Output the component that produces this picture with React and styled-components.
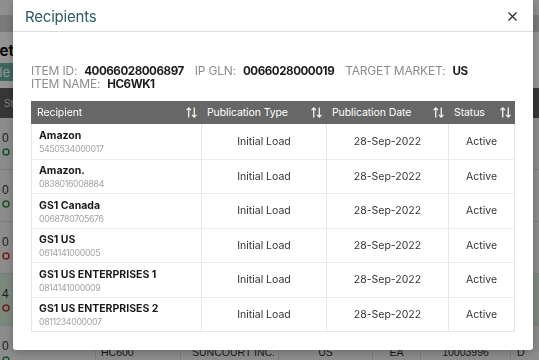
import styled, { createGlobalStyle } from 'styled-components';

const Global = createGlobalStyle`
  html, body { margin: 0; padding: 0; }
  body { font-family: Inter, "Noto Sans", Arial, sans-serif; background: #fff; }
`;

const Page = styled.div`
  width: 539px;
  height: 360px;
  overflow: hidden;
  background: #fff;
`;

const TopStrip = styled.div`
  height: ${p => p.h}px;
  background: ${p => p.bg};
`;

const ClipRow = styled.div`
  height: ${p => p.h}px;
  box-sizing: border-box;
  display: flex;
  align-items: center;
  padding-top: ${p => p.pt || 0}px;
`;

const ClipBox = styled.div`
  width: 14px;
  display: flex;
  justify-content: flex-end;
  overflow: hidden;
  white-space: nowrap;
`;

const PageTitle = styled.span`
  font-weight: 700;
  font-size: 15px;
  color: #111;
`;

const TealButton = styled.span`
  background: #67b0a4;
  color: #fff;
  font-size: 13px;
  padding: 2px 4px 2px 8px;
  line-height: 14px;
`;

const BgTable = styled.div`
  display: grid;
  grid-template-columns: 95px 85px 98px 94px 48px 90px 1fr;
`;

const BgHead = styled.div`
  height: 30px;
  background: #5e5e5e;
  color: #ddd;
  font-size: 10px;
  line-height: 11px;
  display: flex;
  flex-direction: column;
  justify-content: center;
  padding-left: 4px;
`;

const BgCell = styled.div`
  height: 52px;
  box-sizing: border-box;
  border-bottom: 1px solid #d6d6d6;
  border-left: ${p => (p.first ? 'none' : '1px solid #d6d6d6')};
  background: ${p => (p.hl ? '#d4ead6' : '#f1f1f1')};
  font-family: "Liberation Sans", Arial, sans-serif;
  font-size: 10.5px;
  color: #333;
  white-space: nowrap;
  overflow: hidden;
  display: flex;
  align-items: center;
  justify-content: ${p => (p.center ? 'center' : 'flex-start')};
  padding-left: ${p => p.pl || 0}px;
`;

const BgFirst = styled(BgCell)`
  flex-direction: column;
  align-items: flex-start;
  justify-content: flex-start;
  padding: 13px 0 0 2px;
  gap: 3px;
  font-size: 12px;
`;

const Overlay = styled.div`
  position: fixed;
  inset: 0;
  background: rgba(0, 0, 0, 0.42);
  display: flex;
  align-items: flex-start;
  padding-left: 13px;
`;

const Modal = styled.div`
  width: 520px;
  height: 350px;
  background: #fff;
  border-radius: 0 0 3px 3px;
  box-shadow: 0 2px 8px rgba(0, 0, 0, 0.25);
  display: flex;
  flex-direction: column;
`;

const ModalHeader = styled.div`
  height: 35px;
  box-sizing: border-box;
  border-bottom: 1px solid #dcdcdc;
  display: flex;
  align-items: center;
  justify-content: space-between;
  padding: 2px 15px 0 12px;
`;

const Title = styled.h2`
  margin: 0;
  font-size: 15px;
  font-weight: 400;
  color: #2c5c62;
  letter-spacing: -0.2px;
`;

const CloseBtn = styled.button`
  border: 0;
  background: none;
  padding: 0;
  width: 11px;
  height: 11px;
  display: flex;
  cursor: pointer;
`;

const Body = styled.div`
  padding: 32px 18px 18px;
  display: flex;
  flex-direction: column;
  gap: 11px;
`;

const Info = styled.div`
  font-size: 12px;
  line-height: 13px;
`;

const InfoLine = styled.div`
  display: flex;
  align-items: baseline;
  height: 13px;
  white-space: nowrap;
`;

const Label = styled.span`
  color: #8c8c8c;
  margin-right: 7px;
  letter-spacing: -0.2px;
`;

const Value = styled.span`
  color: #1c1c1c;
  font-weight: 700;
  font-size: 11.6px;
  letter-spacing: -0.45px;
  margin-right: 11px;
`;

const Table = styled.div`
  display: grid;
  grid-template-columns: 170px 125px 122px 67px;
  border-bottom: 1px solid #e6e6e6;
`;

const Th = styled.div`
  height: 23px;
  background: #676767;
  color: #fff;
  font-size: 10.5px;
  letter-spacing: -0.1px;
  display: flex;
  align-items: center;
  justify-content: space-between;
  padding: 0 4px 0 6px;
`;

const Td = styled.div`
  height: 34.5px;
  box-sizing: border-box;
  border-top: ${p => (p.firstRow ? 'none' : '1px solid #ececec')};
  border-left: 1px solid #e6e6e6;
  border-right: ${p => (p.last ? '1px solid #e6e6e6' : 'none')};
  display: flex;
  align-items: center;
  justify-content: center;
  font-size: 10.5px;
  color: #333;
`;

const RecipientCell = styled(Td)`
  flex-direction: column;
  align-items: flex-start;
  justify-content: center;
  padding: 1px 0 0 7px;
  gap: 1px;
`;

const Name = styled.div`
  font-weight: 700;
  font-size: 10.5px;
  color: #1a1a1a;
`;

const Gln = styled.div`
  font-size: 8.8px;
  letter-spacing: -0.35px;
  color: #a3a3a3;
`;

const SortIcon = () => (
  <svg width="11" height="11" viewBox="0 0 12 12" fill="none" stroke="#fff" strokeWidth="1.3">
    <path d="M3 11.5V1M0.6 3.4L3 1l2.4 2.4" />
    <path d="M9 0.5V11M6.6 8.6L9 11l2.4-2.4" />
  </svg>
);

const LinkDot = ({ color }) => (
  <svg width="8" height="8" viewBox="0 0 8 8">
    <circle cx="4" cy="4" r="3" fill="none" stroke={color} strokeWidth="1.6" />
  </svg>
);

const recipients = [
  ['Amazon', '5450534000017'],
  ['Amazon.', '0838016008884'],
  ['GS1 Canada', '0068780705676'],
  ['GS1 US', '0614141000005'],
  ['GS1 US ENTERPRISES 1', '0814141000009'],
  ['GS1 US ENTERPRISES 2', '0811234000007'],
];

const bgRows = [
  { n: '0', icon: '#2f8f3a' },
  { n: '0', icon: '#2f8f3a' },
  { n: '0', icon: '#c0392b' },
  { n: '4', icon: '#c0392b', hl: true },
  { n: '0', icon: '#2f8f3a' },
];

function Background() {
  return (
    <Page>
      <TopStrip h={15} bg="#f6f6f6" />
      <TopStrip h={17} bg="#d2d2d2" />
      <ClipRow h={30} pt={6}>
        <ClipBox><PageTitle>Cabinet</PageTitle></ClipBox>
      </ClipRow>
      <ClipRow h={20}>
        <ClipBox><TealButton>Sample</TealButton></ClipBox>
      </ClipRow>
      <TopStrip h={6} bg="#fff" />
      <BgTable>
        <BgHead>Status</BgHead>
        <BgHead>Item</BgHead>
        <BgHead>Brand</BgHead>
        <BgHead>Market</BgHead>
        <BgHead>UOM</BgHead>
        <BgHead>GTIN</BgHead>
        <BgHead><span>G</span><span>D</span></BgHead>
        {bgRows.map((r, i) => (
          <>
            <BgFirst key={`a${i}`} first hl={r.hl}>
              <span>{r.n}</span>
              <LinkDot color={r.icon} />
            </BgFirst>
            <BgCell key={`b${i}`} hl={r.hl} pl={5}>HC600</BgCell>
            <BgCell key={`c${i}`} hl={r.hl} pl={11}>SUNCOURT INC.</BgCell>
            <BgCell key={`d${i}`} hl={r.hl} center>US</BgCell>
            <BgCell key={`e${i}`} hl={r.hl} center>EA</BgCell>
            <BgCell key={`f${i}`} hl={r.hl} center>10003996</BgCell>
            <BgCell key={`g${i}`} hl={r.hl} pl={6}>D</BgCell>
          </>
        ))}
      </BgTable>
    </Page>
  );
}

export default function App() {
  return (
    <>
      <Global />
      <Background />
      <Overlay>
        <Modal>
          <ModalHeader>
            <Title>Recipients</Title>
            <CloseBtn aria-label="Close">
              <svg width="11" height="11" viewBox="0 0 11 11" stroke="#2a2a2a" strokeWidth="1.2">
                <path d="M1.5 1.5l8 8M9.5 1.5l-8 8" />
              </svg>
            </CloseBtn>
          </ModalHeader>
          <Body>
            <Info>
              <InfoLine>
                <Label>ITEM ID:</Label><Value>40066028006897</Value>
                <Label>IP GLN:</Label><Value>0066028000019</Value>
                <Label>TARGET MARKET:</Label><Value>US</Value>
              </InfoLine>
              <InfoLine>
                <Label>ITEM NAME:</Label><Value>HC6WK1</Value>
              </InfoLine>
            </Info>
            <Table>
              <Th>Recipient<SortIcon /></Th>
              <Th>Publication Type<SortIcon /></Th>
              <Th>Publication Date<SortIcon /></Th>
              <Th>Status<SortIcon /></Th>
              {recipients.map(([name, gln], i) => (
                <>
                  <RecipientCell key={`r${i}`} firstRow={i === 0}>
                    <Name>{name}</Name>
                    <Gln>{gln}</Gln>
                  </RecipientCell>
                  <Td key={`t${i}`} firstRow={i === 0}>Initial Load</Td>
                  <Td key={`d${i}`} firstRow={i === 0}>28-Sep-2022</Td>
                  <Td key={`s${i}`} firstRow={i === 0} last>Active</Td>
                </>
              ))}
            </Table>
          </Body>
        </Modal>
      </Overlay>
    </>
  );
}
